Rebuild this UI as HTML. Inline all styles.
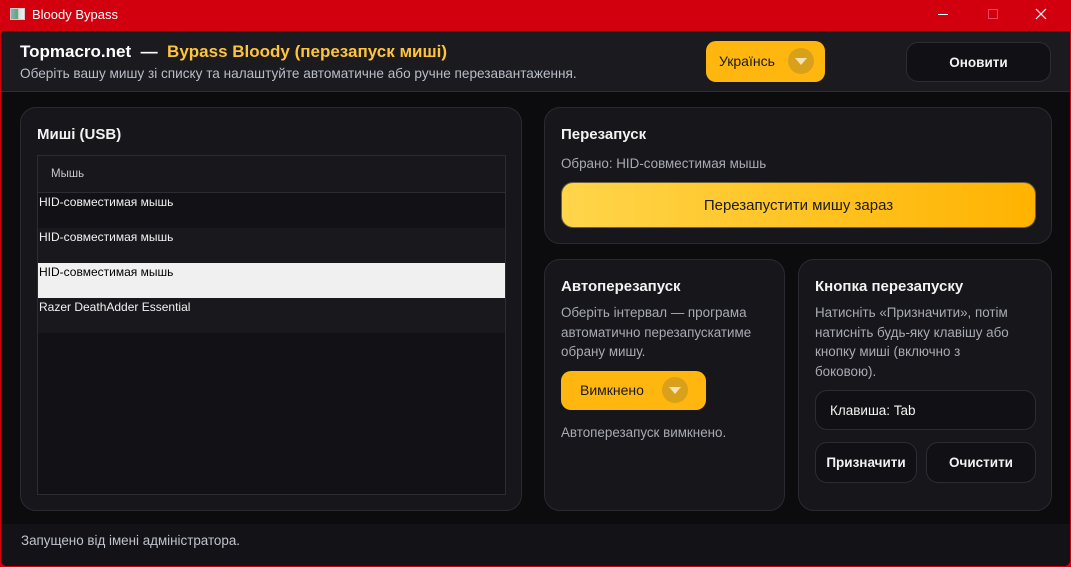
<!DOCTYPE html>
<html><head><meta charset="utf-8"><style>
*{box-sizing:border-box;margin:0;padding:0}
body{width:1071px;height:567px;background:#d2000f;font-family:"Liberation Sans","DejaVu Sans",sans-serif;overflow:hidden;position:relative;color:#f0f0f0}
.abs{position:absolute}
.win{position:absolute;left:1px;top:31px;width:1069px;height:535px;background:#0c0c0e;border-radius:0 0 6px 6px;overflow:hidden}
.panel{position:absolute;background:#16161b;border:1px solid #2a2a31;border-radius:16px}
.h{font-size:15px;font-weight:bold;color:#f2f2f2;position:absolute}
.t{font-size:13.4px;color:#a9abb2;position:absolute;line-height:19.5px}
.btn{position:absolute;border:1px solid #2c2c33;background:#111115;border-radius:12px;display:flex;align-items:center;justify-content:center;font-size:13.5px;font-weight:bold;color:#f2f2f2}
.row{position:absolute;left:0;width:467px;height:35px;font-size:12px;padding:2px 1px;color:#f2f2f2}
.dd{position:absolute;background:#ffb70f;border-radius:10px;color:#1a1a1a;font-size:14px}
.circ{position:absolute;width:26px;height:26px;border-radius:50%;background:#d9a01a}
.circ:after{content:"";position:absolute;left:7px;top:10px;border-left:6px solid transparent;border-right:6px solid transparent;border-top:7px solid #f2e2b8}
</style></head><body>
<div class="abs" style="left:10px;top:8px;width:15px;height:12px;background:linear-gradient(90deg,#9ab 0,#5a7 50%,#ddd 60%,#eee);border:1px solid #ccc"></div>
<div class="abs" style="left:32px;top:7px;font-size:13px;color:#fff">Bloody Bypass</div>
<div class="abs" style="left:938px;top:14px;width:10px;height:1px;background:#fff"></div>
<div class="abs" style="left:988px;top:9px;width:10px;height:10px;border:1px solid #e46"></div>
<svg class="abs" style="left:1035px;top:8px" width="12" height="12"><path d="M1 1L11 11M11 1L1 11" stroke="#fff" stroke-width="1.2"/></svg>
<div class="win">
<div class="abs" style="left:0;top:0;width:1069px;height:61px;background:#1a1a1f;border-bottom:1px solid #2e2e34"></div>
<div class="abs" style="left:19px;top:11px;font-size:17px;font-weight:bold;color:#fff">Topmacro.net &nbsp;— &nbsp;<span style="color:#ffc43a">Bypass Bloody (перезапуск миші)</span></div>
<div class="abs" style="left:19px;top:35px;font-size:13.6px;color:#b9bdc8">Оберіть вашу мишу зі списку та налаштуйте автоматичне або ручне перезавантаження.</div>
<div class="dd" style="left:705px;top:10px;width:119px;height:41px"><span class="abs" style="left:13px;top:12px">Українсь</span><div class="circ" style="left:82px;top:7px"></div></div>
<div class="btn" style="left:905px;top:11px;width:145px;height:40px;border-radius:12px">Оновити</div>

<div class="panel" style="left:19px;top:76px;width:502px;height:404px">
<div class="h" style="left:16px;top:18px">Миші (USB)</div>
<div class="abs" style="left:16px;top:47px;width:469px;height:340px;background:#121216;border:1px solid #2c2c33">
<div class="abs" style="left:0;top:0;width:467px;height:37px;background:#17171c;border-bottom:1px solid #2c2c33;font-size:11.5px;color:#c8c8cc;padding:12px 0 0 13px">Мышь</div>
<div class="row" style="top:37px;background:#121216">HID-совместимая мышь</div>
<div class="row" style="top:72px;background:#18181d">HID-совместимая мышь</div>
<div class="row" style="top:107px;background:#f0f0f0;color:#000">HID-совместимая мышь</div>
<div class="row" style="top:142px;background:#18181d">Razer DeathAdder Essential</div>
</div></div>

<div class="panel" style="left:543px;top:76px;width:508px;height:137px">
<div class="h" style="left:16px;top:18px">Перезапуск</div>
<div class="t" style="left:16px;top:46px">Обрано: HID-совместимая мышь</div>
<div class="abs" style="left:16px;top:74px;width:475px;height:46px;border-radius:12px;background:linear-gradient(90deg,#ffd54a,#ffb300);border:1px solid #6a6040;display:flex;align-items:center;justify-content:center;font-size:15px;color:#1a1a1a">Перезапустити мишу зараз</div>
</div>

<div class="panel" style="left:543px;top:228px;width:241px;height:252px">
<div class="h" style="left:16px;top:18px">Автоперезапуск</div>
<div class="t" style="left:16px;top:43px">Оберіть інтервал — програма<br>автоматично перезапускатиме<br>обрану мишу.</div>
<div class="dd" style="left:16px;top:111px;width:145px;height:39px"><span class="abs" style="left:19px;top:11px">Вимкнено</span><div class="circ" style="left:101px;top:6px"></div></div>
<div class="t" style="left:16px;top:163px">Автоперезапуск вимкнено.</div>
</div>

<div class="panel" style="left:797px;top:228px;width:254px;height:252px">
<div class="h" style="left:16px;top:18px">Кнопка перезапуску</div>
<div class="t" style="left:16px;top:43px">Натисніть «Призначити», потім<br>натисніть будь-яку клавішу або<br>кнопку миші (включно з<br>боковою).</div>
<div class="btn" style="left:16px;top:130px;width:221px;height:40px;justify-content:flex-start;padding-left:14px;font-weight:normal;font-size:13.5px">Клавиша: Tab</div>
<div class="btn" style="left:16px;top:182px;width:102px;height:41px">Призначити</div>
<div class="btn" style="left:127px;top:182px;width:110px;height:41px">Очистити</div>
</div>

<div class="abs" style="left:0;top:493px;width:1069px;height:42px;background:#131317"></div>
<div class="abs" style="left:20px;top:502px;font-size:13.4px;color:#c0c3cc">Запущено від імені адміністратора.</div>
</div>
</body></html>
